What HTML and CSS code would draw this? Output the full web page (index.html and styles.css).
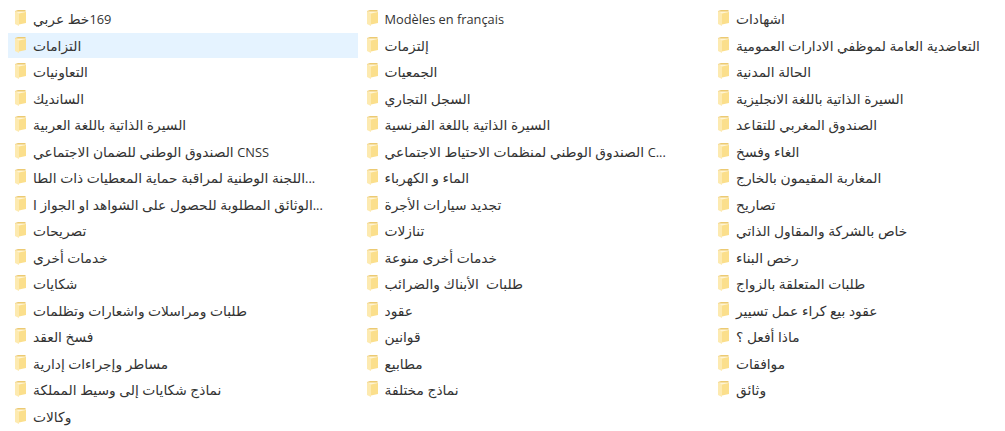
FILE: index.html
```html
<!DOCTYPE html>
<html lang="en">
<head>
    <meta charset="UTF-8">
    <meta name="viewport" content="width=device-width, initial-scale=1.0">
    <title>Dossiers</title>
    <link rel="stylesheet" href="styles.css">
</head>
<body>
    <svg class="sprite" width="0" height="0">
        <symbol id="folder" viewBox="0 0 11 16">
            <path d="M0 1 3 0H10.5V13H0Z" fill="#ecca72"/>
            <path d="M1 1.5H10.5V13H1Z" fill="#fff5d6"/>
            <path d="M0 1 4 3.5V16L0 14Z" fill="#fdeab0"/>
            <path d="M4 3.5 11 2V13L4 14.5Z" fill="#fbdf8c"/>
        </symbol>
    </svg>
    <main class="folders">
        <ul class="column">
            <li class="folder"><svg class="icon"><use href="#folder"/></svg><span class="name" dir="rtl"><span class="latin">169</span>خط عربي</span></li>
            <li class="folder selected"><svg class="icon"><use href="#folder"/></svg><span class="name">التزامات</span></li>
            <li class="folder"><svg class="icon"><use href="#folder"/></svg><span class="name">التعاونيات</span></li>
            <li class="folder"><svg class="icon"><use href="#folder"/></svg><span class="name">السانديك</span></li>
            <li class="folder"><svg class="icon"><use href="#folder"/></svg><span class="name">السيرة الذاتية باللغة العربية</span></li>
            <li class="folder"><svg class="icon"><use href="#folder"/></svg><span class="name">الصندوق الوطني للضمان الاجتماعي <span class="latin">CNSS</span></span></li>
            <li class="folder"><svg class="icon"><use href="#folder"/></svg><span class="name">اللجنة الوطنية لمراقبة حماية المعطيات ذات الطا<span class="latin">...</span></span></li>
            <li class="folder"><svg class="icon"><use href="#folder"/></svg><span class="name">الوثائق المطلوبة للحصول على الشواهد او الجواز ا<span class="latin">...</span></span></li>
            <li class="folder"><svg class="icon"><use href="#folder"/></svg><span class="name">تصريحات</span></li>
            <li class="folder"><svg class="icon"><use href="#folder"/></svg><span class="name">خدمات أخرى</span></li>
            <li class="folder"><svg class="icon"><use href="#folder"/></svg><span class="name">شكايات</span></li>
            <li class="folder"><svg class="icon"><use href="#folder"/></svg><span class="name">طلبات ومراسلات واشعارات وتظلمات</span></li>
            <li class="folder"><svg class="icon"><use href="#folder"/></svg><span class="name">فسخ العقد</span></li>
            <li class="folder"><svg class="icon"><use href="#folder"/></svg><span class="name">مساطر وإجراءات إدارية</span></li>
            <li class="folder"><svg class="icon"><use href="#folder"/></svg><span class="name">نماذج شكايات إلى وسيط المملكة</span></li>
            <li class="folder"><svg class="icon"><use href="#folder"/></svg><span class="name">وكالات</span></li>
        </ul>
        <ul class="column">
            <li class="folder"><svg class="icon"><use href="#folder"/></svg><span class="name latin">Modèles en français</span></li>
            <li class="folder"><svg class="icon"><use href="#folder"/></svg><span class="name">إلتزمات</span></li>
            <li class="folder"><svg class="icon"><use href="#folder"/></svg><span class="name">الجمعيات</span></li>
            <li class="folder"><svg class="icon"><use href="#folder"/></svg><span class="name">السجل التجاري</span></li>
            <li class="folder"><svg class="icon"><use href="#folder"/></svg><span class="name">السيرة الذاتية باللغة الفرنسية</span></li>
            <li class="folder"><svg class="icon"><use href="#folder"/></svg><span class="name">الصندوق الوطني لمنظمات الاحتياط الاجتماعي <span class="latin">C...</span></span></li>
            <li class="folder"><svg class="icon"><use href="#folder"/></svg><span class="name">الماء و الكهرباء</span></li>
            <li class="folder"><svg class="icon"><use href="#folder"/></svg><span class="name">تجديد سيارات الأجرة</span></li>
            <li class="folder"><svg class="icon"><use href="#folder"/></svg><span class="name">تنازلات</span></li>
            <li class="folder"><svg class="icon"><use href="#folder"/></svg><span class="name">خدمات أخرى منوعة</span></li>
            <li class="folder"><svg class="icon"><use href="#folder"/></svg><span class="name">طلبات  الأبناك والضرائب</span></li>
            <li class="folder"><svg class="icon"><use href="#folder"/></svg><span class="name">عقود</span></li>
            <li class="folder"><svg class="icon"><use href="#folder"/></svg><span class="name">قوانين</span></li>
            <li class="folder"><svg class="icon"><use href="#folder"/></svg><span class="name">مطابيع</span></li>
            <li class="folder"><svg class="icon"><use href="#folder"/></svg><span class="name">نماذج مختلفة</span></li>
        </ul>
        <ul class="column">
            <li class="folder"><svg class="icon"><use href="#folder"/></svg><span class="name">اشهادات</span></li>
            <li class="folder"><svg class="icon"><use href="#folder"/></svg><span class="name">التعاضدية العامة لموظفي الادارات العمومية</span></li>
            <li class="folder"><svg class="icon"><use href="#folder"/></svg><span class="name">الحالة المدنية</span></li>
            <li class="folder"><svg class="icon"><use href="#folder"/></svg><span class="name">السيرة الذاتية باللغة الانجليزية</span></li>
            <li class="folder"><svg class="icon"><use href="#folder"/></svg><span class="name">الصندوق المغربي للتقاعد</span></li>
            <li class="folder"><svg class="icon"><use href="#folder"/></svg><span class="name">الغاء وفسخ</span></li>
            <li class="folder"><svg class="icon"><use href="#folder"/></svg><span class="name">المغاربة المقيمون بالخارج</span></li>
            <li class="folder"><svg class="icon"><use href="#folder"/></svg><span class="name">تصاريح</span></li>
            <li class="folder"><svg class="icon"><use href="#folder"/></svg><span class="name">خاص بالشركة والمقاول الذاتي</span></li>
            <li class="folder"><svg class="icon"><use href="#folder"/></svg><span class="name">رخص البناء</span></li>
            <li class="folder"><svg class="icon"><use href="#folder"/></svg><span class="name">طلبات المتعلقة بالزواج</span></li>
            <li class="folder"><svg class="icon"><use href="#folder"/></svg><span class="name">عقود بيع كراء عمل تسيير</span></li>
            <li class="folder"><svg class="icon"><use href="#folder"/></svg><span class="name">ماذا أفعل ؟</span></li>
            <li class="folder"><svg class="icon"><use href="#folder"/></svg><span class="name">موافقات</span></li>
            <li class="folder"><svg class="icon"><use href="#folder"/></svg><span class="name">وثائق</span></li>
        </ul>
    </main>
</body>
</html>
```

FILE: styles.css
```css
html, body {
    margin: 0;
    padding: 0;
    background-color: #fff;
    overflow: hidden;
}
body {
    font-family: "Open Sans", "DejaVu Sans", sans-serif;
    font-size: 13.8px;
    line-height: 20px;
    color: #333;
}
.sprite {
    display: block;
}
.folders {
    display: grid;
    grid-template-columns: 349.5px 349.5px 279px;
    column-gap: 2px;
    padding: 6.5px 0 0 8px;
}
.column {
    list-style: none;
    margin: 0;
    padding: 0;
    display: flex;
    flex-direction: column;
    gap: 1.5px;
}
.folder {
    display: flex;
    align-items: center;
    height: 25px;
    padding-left: 7px;
    gap: 7px;
}
.folder.selected {
    background-color: #e5f3ff;
}
.icon {
    width: 11px;
    height: 16px;
    flex: none;
    margin-top: -2px;
}
.name {
    white-space: pre;
}
.latin {
    font-size: 12.8px;
}
```
